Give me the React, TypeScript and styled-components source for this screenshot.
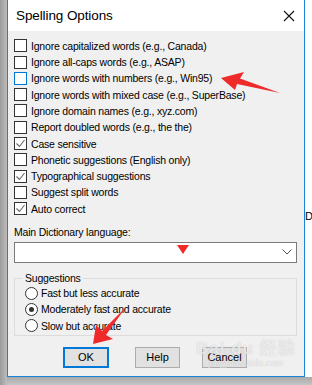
import { createGlobalStyle } from "styled-components";
import styled from "styled-components";

const GlobalStyle = createGlobalStyle`
	html, body {
		margin: 0;
		padding: 0;
		background: #ffffff;
		overflow: hidden;
	}
`;

const Screen = styled.div`
	position: relative;
	width: 312px;
	height: 385px;
	display: grid;
	grid-template-columns: 7px 298px 7px;
	grid-template-rows: 377px 8px;
	font-family: "Liberation Sans", Arial, sans-serif;
	overflow: hidden;
`;

const LeftShade = styled.div`
	grid-row: 1 / 3;
	background: linear-gradient(to right, #9c9c9c, #bdbdbd);
`;

const RightStrip = styled.div`
	background: #ffffff;
	padding-top: 210px;
	font-size: 11px;
	color: #000;
	white-space: nowrap;
	overflow: hidden;
`;

const BottomShade = styled.div`
	grid-column: 2 / 4;
	background: linear-gradient(to bottom, #a9a9a9, #c4c4c4);
`;

const Dialog = styled.div`
	display: flex;
	flex-direction: column;
	border: 1px solid #1883d7;
	border-top: none;
	background: #f0f0f0;
	min-height: 0;
`;

const TitleBar = styled.div`
	height: 31px;
	flex: none;
	display: flex;
	align-items: center;
	justify-content: space-between;
	background: #ffffff;
	padding: 0 9px 0 8px;
`;

const Title = styled.span`
	font-family: "Liberation Sans", Arial, sans-serif;
	font-size: 13.5px;
	letter-spacing: -0.1px;
	color: #000;
`;

const CloseButton = styled.svg`
	width: 12px;
	height: 12px;
`;

const Body = styled.div`
	display: flex;
	flex-direction: column;
	padding: 6.6px 7px 0 6px;
	font-size: 10.5px;
	letter-spacing: -0.2px;
	color: #000;
`;

const OptionList = styled.div`
	display: flex;
	flex-direction: column;
`;

const Row = styled.label`
	height: 16.3px;
	display: flex;
	align-items: center;
	gap: 4px;
	white-space: nowrap;
`;

const Box = styled.span<{ $hover?: boolean }>`
	width: 11px;
	height: 11px;
	flex: none;
	border: 1px solid ${(p) => (p.$hover ? "#0078d7" : "#333333")};
	background: #ffffff;
	display: flex;
	align-items: center;
	justify-content: center;
`;

const FieldLabel = styled.div`
	margin-top: 8px;
	height: 14px;
	line-height: 14px;
`;

const Select = styled.div`
	margin-top: 3px;
	height: 19px;
	border: 1px solid #7a7a7a;
	background: #ffffff;
	display: flex;
	align-items: center;
	justify-content: flex-end;
	padding-right: 4px;
`;

const Group = styled.fieldset`
	margin: 9px 0 0;
	padding: 0 0 1px 10px;
	border: 1px solid #dcdcdc;
	min-width: 0;
`;

const Legend = styled.legend`
	padding: 0 2px;
	margin-left: -2px;
	line-height: 13px;
`;

const RadioRow = styled.label`
	height: 16.3px;
	display: flex;
	align-items: center;
	gap: 3px;
	white-space: nowrap;
`;

const Radio = styled.span<{ $checked?: boolean }>`
	width: 11px;
	height: 11px;
	flex: none;
	border: 1px solid #333333;
	border-radius: 50%;
	background: #ffffff;
	display: flex;
	align-items: center;
	justify-content: center;

	&::after {
		content: "";
		width: 5px;
		height: 5px;
		border-radius: 50%;
		background: ${(p) => (p.$checked ? "#333333" : "transparent")};
	}
`;

const ButtonBar = styled.div`
	display: flex;
	gap: 22px;
	margin-top: 11px;
	padding-left: 49px;
`;

const Button = styled.div<{ $default?: boolean }>`
	width: ${(p) => (p.$default ? "42px" : "43px")};
	height: ${(p) => (p.$default ? "17px" : "19px")};
	margin-right: ${(p) => (p.$default ? "4px" : "0")};
	border: ${(p) => (p.$default ? "2px solid #0078d7" : "1px solid #adadad")};
	background: #e1e1e1;
	display: flex;
	align-items: center;
	justify-content: center;
	font-size: 11px;
	letter-spacing: 0;
`;

const Overlay = styled.svg`
	position: absolute;
	inset: 0;
	pointer-events: none;
`;

const Watermark = styled.div`
	position: absolute;
	left: 196px;
	top: 334px;
	display: flex;
	flex-direction: column;
	align-items: center;
	color: rgba(255, 255, 255, 0.7);
	text-shadow: 0 0 1px rgba(120, 120, 120, 0.45);
	pointer-events: none;
`;

const WatermarkMain = styled.span`
	font-family: "Liberation Sans", "Noto Sans CJK SC", sans-serif;
	font-size: 17px;
	font-weight: bold;
	letter-spacing: 1px;
`;

const WatermarkSub = styled.span`
	font-family: "Liberation Serif", serif;
	font-size: 10px;
	margin-top: -2px;
`;

const checks = [
	{ text: "Ignore capitalized words (e.g., Canada)", checked: false },
	{ text: "Ignore all-caps words (e.g., ASAP)", checked: false },
	{ text: "Ignore words with numbers (e.g., Win95)", checked: false, hover: true },
	{ text: "Ignore words with mixed case (e.g., SuperBase)", checked: false },
	{ text: "Ignore domain names (e.g., xyz.com)", checked: false },
	{ text: "Report doubled words (e.g., the the)", checked: false },
	{ text: "Case sensitive", checked: true },
	{ text: "Phonetic suggestions (English only)", checked: false },
	{ text: "Typographical suggestions", checked: true },
	{ text: "Suggest split words", checked: false },
	{ text: "Auto correct", checked: true },
];

const radios = [
	{ text: "Fast but less accurate", checked: false },
	{ text: "Moderately fast and accurate", checked: true },
	{ text: "Slow but accurate", checked: false },
];

function CheckMark() {
	return (
		<svg width="9" height="9" viewBox="0 0 9 9">
			<path d="M0.5 4.5 L3.5 7.5 L8.5 1" fill="none" stroke="#666666" strokeWidth="1.1" />
		</svg>
	);
}

export default function App() {
	return (
		<>
			<GlobalStyle />
			<Screen>
				<LeftShade />
				<Dialog>
					<TitleBar>
						<Title>Spelling Options</Title>
						<CloseButton viewBox="0 0 12 12">
							<path d="M1 1 L11 11 M11 1 L1 11" stroke="#111" strokeWidth="1.1" />
						</CloseButton>
					</TitleBar>

					<Body>
						<OptionList>
							{checks.map((item) =>
								<Row key={item.text}>
									<Box $hover={item.hover}>{item.checked ? <CheckMark /> : null}</Box>
									{item.text}
								</Row>)
							}
						</OptionList>

						<FieldLabel>Main Dictionary language:</FieldLabel>
						<Select>
							<svg width="10" height="6" viewBox="0 0 10 6">
								<path d="M0.5 0.5 L5 5 L9.5 0.5" fill="none" stroke="#555" strokeWidth="1" />
							</svg>
						</Select>

						<Group>
							<Legend>Suggestions</Legend>
							{radios.map((item) =>
								<RadioRow key={item.text}>
									<Radio $checked={item.checked} />
									{item.text}
								</RadioRow>)
							}
						</Group>

						<ButtonBar>
							<Button $default>OK</Button>
							<Button>Help</Button>
							<Button>Cancel</Button>
						</ButtonBar>
					</Body>
				</Dialog>
				<RightStrip>Dr</RightStrip>
				<BottomShade />

				<Watermark>
					<WatermarkMain>Bai du 经验</WatermarkMain>
					<WatermarkSub>jingyan.baidu.com</WatermarkSub>
				</Watermark>

				<Overlay width="312" height="385" viewBox="0 0 312 385">
					<polygon points="221,78 244,72 240,78.5 280,93 237,84 235,90" fill="#ef2a2a" />
					<polygon points="93,344 96,325 102,331 126,307 106,335 113,339" fill="#ef2a2a" />
					<polygon points="177,245 189,245 183,254" fill="#ef2a2a" />
				</Overlay>
			</Screen>
		</>
	);
}
